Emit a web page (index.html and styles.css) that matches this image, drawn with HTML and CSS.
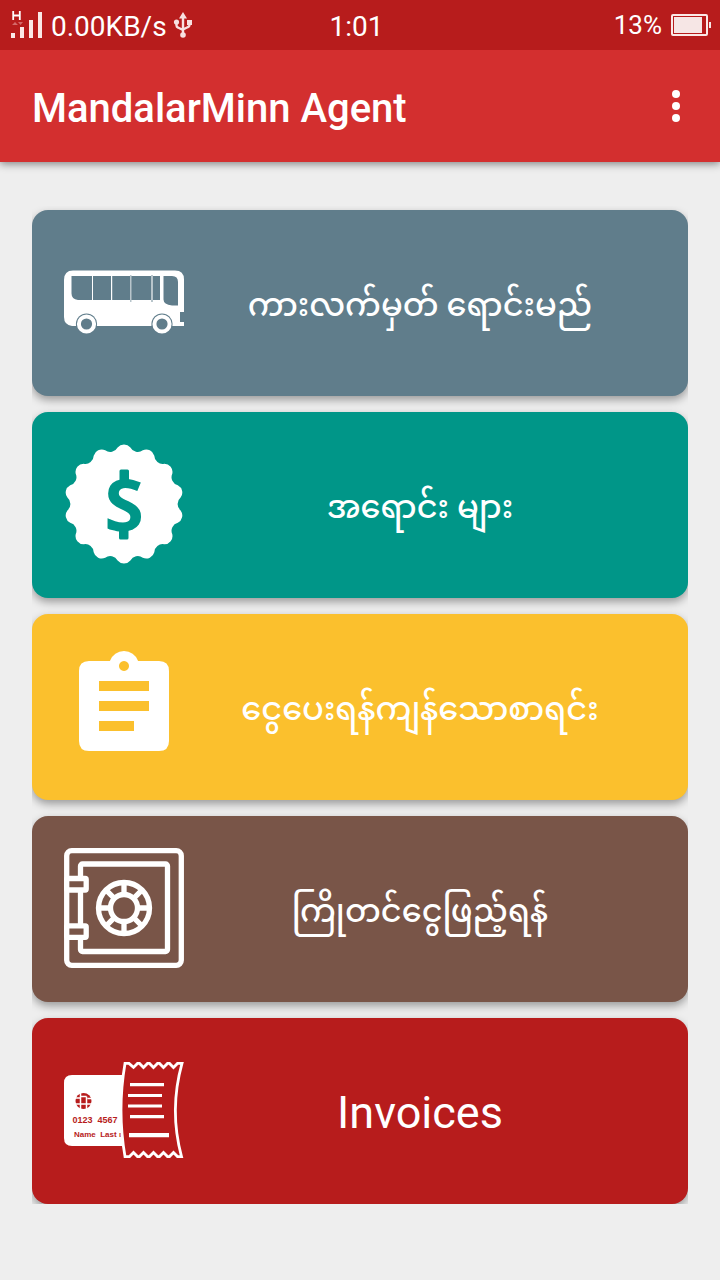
FILE: index.html
```html
<!DOCTYPE html>
<html lang="my">
<head>
<meta charset="utf-8">
<meta name="viewport" content="width=device-width, initial-scale=1">
<title>MandalarMinn Agent</title>
<link rel="stylesheet" href="styles.css">
</head>
<body>
<div class="status">
  <div class="status-left">
    <svg class="signal" viewBox="0 0 32 30" aria-hidden="true">
      <path d="M3.200 1v9M9.800 1v9M3.200 5.500h6.600" fill="none" stroke="#fff" stroke-width="1.800"/>
      <path d="M2 15l3-3 3 3zM8 12h5l-2.500 3z" fill="#d46a6a"/>
      <path d="M1 23h4v5H1zM10 17h4v11h-4zM19 10h4v18h-4zM28 2h4v26h-4z" fill="#fbe9e7"/>
    </svg>
    <span class="rate">0.00KB/s</span>
    <svg class="usb" viewBox="0 0 20 26" aria-hidden="true">
      <path d="M10 5v18M3.500 10v3.500q0 1.500 1.500 2l5 2.500M16.500 9v4q0 1.500-1.500 2l-5 2.500" fill="none" stroke="#f8e0e0" stroke-width="2.400"/>
      <path d="M10 0l4 6.500H6zM14 8h5v5h-5z" fill="#f8e0e0"/>
      <circle cx="3.500" cy="10" r="2.600" fill="#f8e0e0"/>
      <circle cx="10" cy="23" r="2.800" fill="#f8e0e0"/>
    </svg>
  </div>
  <span class="clock">1:01</span>
  <div class="status-right">
    <span class="charge">13%</span>
    <svg class="battery" viewBox="0 0 40 22" aria-hidden="true">
      <rect x="1" y="1" width="35" height="20" rx="1" fill="none" stroke="#fbe9e7" stroke-width="2"/>
      <path d="M3 3h28v16H3zM38 8h2v6h-2z" fill="#f6e6e5"/>
    </svg>
  </div>
</div>
<header class="appbar">
  <h1 class="title">MandalarMinn Agent</h1>
  <button class="more" type="button" aria-label="More options">
    <svg viewBox="0 0 8 32" aria-hidden="true"><circle cx="4" cy="4" r="4"/><circle cx="4" cy="16" r="4"/><circle cx="4" cy="28" r="4"/></svg>
  </button>
</header>
<main class="menu">
  <button class="card slate" type="button">
    <svg class="icon" viewBox="0 -2 120 120" aria-hidden="true">
      <path fill="#fff" d="M9 26.500h102q9 0 9 9V68h-4v10h4v4H108.500a11.200 11.200 0 0 0-21 0H33a11.200 11.200 0 0 0-21 0H8Q0 81 0 73V36q0-9.500 9-9.500z"/>
      <path fill="#607d8b" d="M7.500 32H96v24H14q-6.500-1-6.500-6.500zM99.500 32H108q6 0 6 6v23.500h-6q-8.500-1-8.500-6z"/>
      <path fill="#fff" d="M28 31h1v27h-1zM47 31h1.200v27H47z"/>
      <path fill="#b8c5cb" d="M66 31h1.500v27H66zM87 31h2v27h-2z"/>
      <circle cx="22.500" cy="80" r="10.600" fill="#607d8b"/>
      <circle cx="98" cy="80" r="10.600" fill="#607d8b"/>
      <circle cx="22.500" cy="80" r="7.600" fill="none" stroke="#fff" stroke-width="4"/>
      <circle cx="98" cy="80" r="7.600" fill="none" stroke="#fff" stroke-width="4"/>
    </svg>
    <span class="label">ကားလက်မှတ် ရောင်းမည်</span>
  </button>
  <button class="card teal" type="button">
    <svg class="icon" viewBox="0 0 120 120" aria-hidden="true">
      <path fill="#fff" d="M53.600 3.400A8.300 8.300 0 0 1 66.400 3.400A8.300 8.300 0 0 0 78.800 6.200A8.300 8.300 0 0 1 90.300 11.700A8.300 8.300 0 0 0 100.300 19.700A8.300 8.300 0 0 1 108.300 29.700A8.300 8.300 0 0 0 113.800 41.200A8.300 8.300 0 0 1 116.600 53.600A8.300 8.300 0 0 0 116.600 66.400A8.300 8.300 0 0 1 113.800 78.800A8.300 8.300 0 0 0 108.300 90.300A8.300 8.300 0 0 1 100.300 100.300A8.300 8.300 0 0 0 90.300 108.300A8.300 8.300 0 0 1 78.800 113.800A8.300 8.300 0 0 0 66.400 116.600A8.300 8.300 0 0 1 53.600 116.600A8.300 8.300 0 0 0 41.200 113.800A8.300 8.300 0 0 1 29.700 108.300A8.300 8.300 0 0 0 19.700 100.300A8.300 8.300 0 0 1 11.700 90.300A8.300 8.300 0 0 0 6.200 78.800A8.300 8.300 0 0 1 3.400 66.400A8.300 8.300 0 0 0 3.400 53.600A8.300 8.300 0 0 1 6.200 41.200A8.300 8.300 0 0 0 11.700 29.700A8.300 8.300 0 0 1 19.700 19.700A8.300 8.300 0 0 0 29.700 11.700A8.300 8.300 0 0 1 41.200 6.200A8.300 8.300 0 0 0 53.600 3.400z"/>
      <text class="dollar" x="60" y="87">S</text>
      <path fill="#009688" d="M57 25.500h6.500q1.500 0 1.500 1.500v9h-9.500v-9q0-1.500 1.500-1.500zM55 85h9.500v9q0 1.500-1.500 1.500h-6.500q-1.500 0-1.500-1.500z"/>
    </svg>
    <span class="label">အရောင်း များ</span>
  </button>
  <button class="card amber" type="button">
    <svg class="icon" viewBox="0 0 120 120" aria-hidden="true">
      <path fill="#fff" fill-rule="evenodd" d="M25 15h20.900a15 15 0 0 1 28.200 0H95q10 0 10 10v70q0 10-10 10H25q-10 0-10-10V25q0-10 10-10zM60 15a5 5 0 1 0 .01 0zM35 35h50v10H35zM35 55h50v10H35zM35 75h35v10H35z"/>
    </svg>
    <span class="label">ငွေပေးရန်ကျန်သောစာရင်း</span>
  </button>
  <button class="card brown" type="button">
    <svg class="icon" viewBox="0 0 120 120" aria-hidden="true">
      <g fill="none" stroke="#fff" stroke-width="5.300">
        <rect x="2.700" y="2.700" width="114.600" height="114.600" rx="5"/>
        <rect x="16.500" y="16" width="87" height="87.500" rx="2"/>
        <rect x="2.700" y="30.500" width="19.500" height="11.500" rx="1" fill="#795548"/>
        <rect x="2.700" y="77.800" width="19.500" height="11.500" rx="1" fill="#795548"/>
        <circle cx="60" cy="60" r="25.500"/>
        <circle cx="60" cy="60" r="13.500"/>
        <path d="M60 34v13M60 73v13M34 60h13M73 60h13M41.600 41.600l9 9M69.400 69.400l9 9M41.600 78.400l9-9M69.400 50.600l9-9"/>
      </g>
    </svg>
    <span class="label">ကြိုတင်ငွေဖြည့်ရန်</span>
  </button>
  <button class="card red" type="button">
    <svg class="icon" viewBox="0 0 120 120" aria-hidden="true">
      <path fill="#fff" d="M8 25h53v71H8q-8 0-8-8V33q0-8 8-8z"/>
      <circle cx="19.500" cy="51" r="8" fill="#b71c1c"/>
      <path d="M11 48h5.500M11 54h17M16.500 42v17M22.500 46.500v13M16.500 46.500h6M23.500 48.500h5" fill="none" stroke="#fff" stroke-width="1.500"/>
      <text class="card-number" x="8.500" y="72.500">0123&#160; 4567</text>
      <text class="card-name" x="10" y="87">Name&#160; Last n</text>
      <path fill="#b71c1c" stroke="#fff" stroke-width="2.800" d="M61 13.400h4l4.500 4 4-4h2l4 4 4-4h2l4 4 4-4h2l4 4 4-4h2l4 4 4-4h4.500Q105 60 117.500 106.600h-4l-4-4-4 4h-2l-4-4-4 4h-2l-4-4-4 4h-2l-4-4-4 4h-2l-4-4-4 4H61Q53 60 61 13.400z"/>
      <path fill="#fff" d="M66 33h34v3.300H66zM64 44h34v3H64zM64 54.500h34v3H64zM66 65h34v3.300H66zM65 83h40v4.200H65z"/>
    </svg>
    <span class="label latin">Invoices</span>
  </button>
</main>
</body>
</html>
```
FILE: styles.css
```css
* { box-sizing: border-box; }
body {
  margin: 0;
  min-height: 100vh;
  background: #eee;
  color: #fff;
  font-family: Roboto, "Noto Sans Myanmar", "Noto Sans", sans-serif;
}
button {
  border: 0;
  background: none;
  color: inherit;
  font: inherit;
  cursor: pointer;
}
svg { display: block; flex: none; }
.status {
  position: relative;
  z-index: 1;
  display: grid;
  grid-template-columns: 1fr auto 1fr;
  align-items: center;
  height: 50px;
  padding: 0 9px 0 10px;
  background: #b71c1c;
  font-size: 28px;
  line-height: 34px;
}
.status-left, .status-right { display: flex; align-items: center; }
.status-right { justify-content: flex-end; gap: 9px; }
.signal { width: 32px; height: 30px; }
.rate { margin: 3px 6px 0 9px; }
.usb { width: 20px; height: 26px; }
.clock { padding: 3px 8px 0 0; }
.charge { font-size: 26px; }
.battery { width: 40px; height: 22px; }
.appbar {
  position: relative;
  display: flex;
  align-items: center;
  justify-content: space-between;
  height: 112px;
  padding: 0 32px;
  background: #d32f2f;
  box-shadow: 0 2px 8px rgba(0, 0, 0, .45);
}
.title {
  margin: 6px 0 0;
  font-size: 40px;
  font-weight: 500;
  line-height: 48px;
}
.more { padding: 8px; }
.more svg { width: 8px; height: 32px; fill: #fff; }
.menu {
  display: flex;
  flex-direction: column;
  gap: 16px;
  margin: 44px 32px 0;
  padding-top: 4px;
  overflow: hidden;
}
.card {
  display: flex;
  align-items: center;
  min-height: 186px;
  padding: 32px 32px 34px;
  border-radius: 16px;
  box-shadow: 0 4px 8px rgba(0, 0, 0, .35);
}
.slate { background: #607d8b; }
.teal { background: #009688; }
.amber { background: #fbc02d; }
.brown { background: #795548; }
.red { background: #b71c1c; }
.icon { width: 120px; height: 120px; }
.label {
  flex: 1;
  padding-top: 6px;
  font-size: 32px;
  font-weight: 500;
  line-height: 72px;
  text-align: center;
}
.latin {
  font-size: 45px;
  font-weight: 400;
}
.dollar {
  fill: #009688;
  font: 700 72px "Open Sans", "Noto Sans", sans-serif;
  text-anchor: middle;
}
.card-number, .card-name {
  fill: #b71c1c;
  font: 700 9px "Liberation Sans", sans-serif;
}
.card-name { font-size: 8px; }
```
